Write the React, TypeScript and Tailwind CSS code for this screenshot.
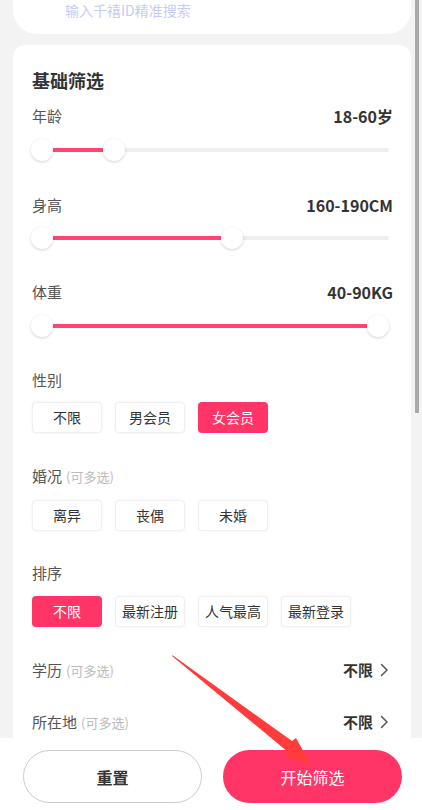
import React from "react";

const PINK = "bg-[#ff3567]";

function Slider({ frac }: { frac: number }) {
  const right = 11 + frac * 336;
  return (
    <div className="relative h-[22px] ml-[-1px] mr-[4px]">
      <div className="absolute left-[11px] right-0 top-[9px] h-[4px] rounded-full bg-[#eeeeee]" />
      <div
        className="absolute top-[9px] h-[4px] bg-[#ff4574]"
        style={{ left: 22, width: Math.max(0, right - 22 - 11) }}
      />
      <div className="absolute left-0 top-0 w-[22px] h-[22px] rounded-full bg-white shadow-[0_1px_3px_rgba(0,0,0,0.18)]" />
      <div
        className="absolute top-0 w-[22px] h-[22px] rounded-full bg-white shadow-[0_1px_3px_rgba(0,0,0,0.18)]"
        style={{ left: right - 11 }}
      />
    </div>
  );
}

function LabelRow({
  label,
  value,
  note,
  chevron,
}: {
  label: string;
  value?: string;
  note?: boolean;
  chevron?: boolean;
}) {
  return (
    <div className="flex items-center justify-between h-[22px]">
      <div className="flex items-baseline">
        <span className="text-[15px] text-[#555555]">{label}</span>
        {note && <span className="ml-[4px] text-[13px] text-[#bbbbbb]">(可多选)</span>}
      </div>
      {value && (
        <div className="flex items-center">
          <span className={chevron ? "text-[15px] font-bold text-[#333333]" : "text-[16px] font-bold text-[#333333]"}>{value}</span>
          {chevron && (
            <svg width="9" height="14" viewBox="0 0 9 14" className="ml-[7px] mr-[4px]">
              <path d="M1.5 1.5 L7 7 L1.5 12.5" fill="none" stroke="#555" strokeWidth="1.5" strokeLinecap="round" strokeLinejoin="round" />
            </svg>
          )}
        </div>
      )}
    </div>
  );
}

function Chips({ items, selected }: { items: string[]; selected: number }) {
  return (
    <div className="flex gap-[13px]">
      {items.map((t, i) => (
        <div
          key={t}
          className={
            i === selected
              ? `w-[70px] h-[31px] rounded-[4px] ${PINK} text-white text-[14px] flex items-center justify-center`
              : "w-[70px] h-[31px] rounded-[4px] bg-white border border-[#f0f0f0] shadow-[0_0_3px_rgba(0,0,0,0.06)] text-[#333333] text-[14px] flex items-center justify-center"
          }
        >
          {t}
        </div>
      ))}
    </div>
  );
}

export default function App() {
  return (
    <div
      className="relative w-[422px] h-[810px] overflow-hidden bg-[#f3f3f3] flex flex-col"
      style={{ fontFamily: '"Noto Sans CJK SC", "Noto Sans", sans-serif' }}
    >
      <div className="flex-1 overflow-hidden px-[13px] pr-[11px]">
        <div className="h-[34px] bg-white rounded-b-[24px] pl-[52px]">
          <div className="text-[14px] leading-[20px] text-[#c6cbf3]">输入千禧ID精准搜索</div>
        </div>
        <div className="mt-[11px] bg-white rounded-[12px] pt-[23px] pb-[40px] pl-[19px] pr-[18px]">
          <div className="text-[18px] leading-[24px] font-bold text-[#333333]">基础筛选</div>
          <div className="mt-[13px]">
            <LabelRow label="年龄" value="18-60岁" />
          </div>
          <div className="mt-[12px]">
            <Slider frac={0.214} />
          </div>
          <div className="mt-[33px]">
            <LabelRow label="身高" value="160-190CM" />
          </div>
          <div className="mt-[11px]">
            <Slider frac={0.565} />
          </div>
          <div className="mt-[32px]">
            <LabelRow label="体重" value="40-90KG" />
          </div>
          <div className="mt-[12px]">
            <Slider frac={1} />
          </div>
          <div className="mt-[32px]">
            <LabelRow label="性别" />
          </div>
          <div className="mt-[11px]">
            <Chips items={["不限", "男会员", "女会员"]} selected={2} />
          </div>
          <div className="mt-[32px]">
            <LabelRow label="婚况" note />
          </div>
          <div className="mt-[13px]">
            <Chips items={["离异", "丧偶", "未婚"]} selected={-1} />
          </div>
          <div className="mt-[31px]">
            <LabelRow label="排序" />
          </div>
          <div className="mt-[12px]">
            <Chips items={["不限", "最新注册", "人气最高", "最新登录"]} selected={0} />
          </div>
          <div className="mt-[32px]">
            <LabelRow label="学历" note value="不限" chevron />
          </div>
          <div className="mt-[30px]">
            <LabelRow label="所在地" note value="不限" chevron />
          </div>
        </div>
      </div>
      <div className="h-[72px] bg-white flex gap-[21px] pl-[23px] pr-[20px] pt-[12px]">
        <div className="w-[179px] h-[53px] rounded-full border border-[#cccccc] flex items-center justify-center text-[16px] font-bold text-[#333333]">
          重置
        </div>
        <div className={`w-[179px] h-[53px] rounded-full ${PINK} flex items-center justify-center text-[16px] text-white`}>
          开始筛选
        </div>
      </div>
      <div className="absolute right-[3px] top-0 w-[4px] h-[413px] bg-[#a9a9a9]" />
      <svg className="absolute left-0 top-0 pointer-events-none" width="422" height="810">
        <polygon
          points="172,656 172.6,655.2 292,741 296,738 311,765 283,757 288,752"
          fill="#ff3b3b"
        />
      </svg>
    </div>
  );
}
